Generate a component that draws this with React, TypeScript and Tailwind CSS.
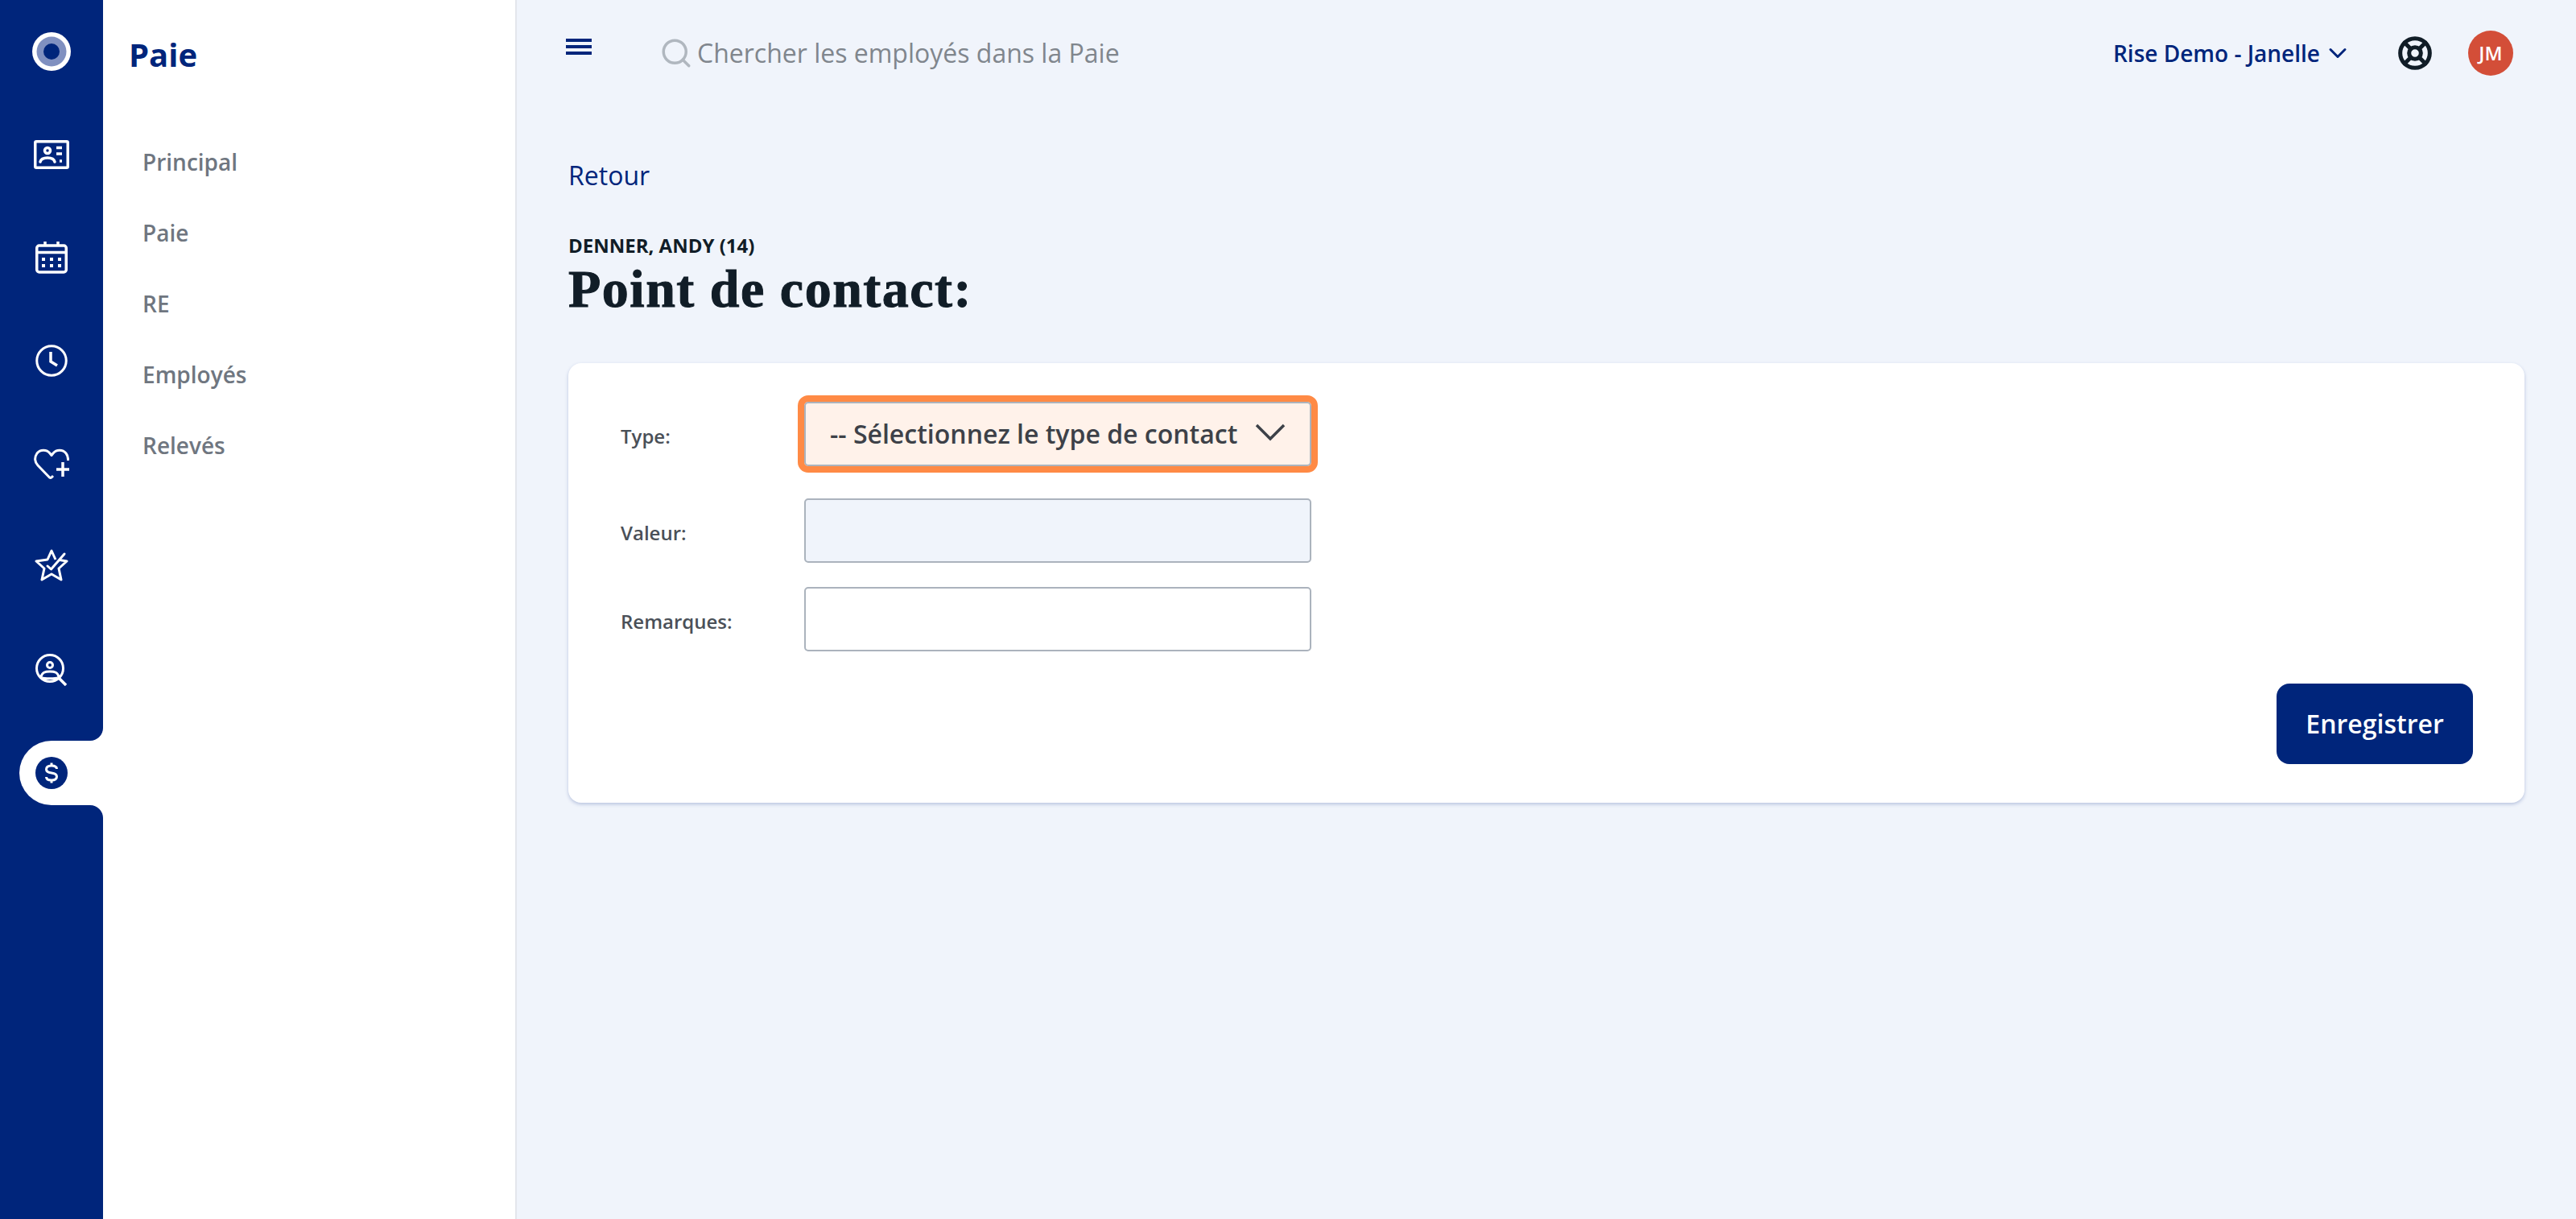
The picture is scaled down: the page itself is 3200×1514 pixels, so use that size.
import { ChevronDown, Search, LifeBuoy } from "lucide-react";

const IdCardIcon = () => (
	<svg width="44" height="36" viewBox="0 0 44 36" fill="none" stroke="white" strokeWidth="3.5">
		<rect x="1.75" y="1.75" width="40.5" height="32.5" rx="1.5" />
		<circle cx="17" cy="13" r="3.5" />
		<path d="M8 27c1-4 5-5 9-5s8 1 9 5" strokeLinecap="round" />
		<path d="M28 9.5h7M28 17h7M32 26h3" strokeWidth="3.5" />
	</svg>
);

const CalendarIcon = () => (
	<svg width="40" height="40" viewBox="0 0 40 40" fill="none" stroke="white" strokeWidth="3.5">
		<rect x="1.75" y="5" width="36.5" height="33" rx="3" />
		<path d="M1.75 13.5h36.5M12 0v6M28 0v6" />
		<path d="M8 22h4M18 22h4M28 22h4M8 30h4M18 30h4M28 30h4" strokeWidth="4" />
	</svg>
);

const ClockIcon = () => (
	<svg width="40" height="40" viewBox="0 0 40 40" fill="none" stroke="white" strokeWidth="3">
		<circle cx="20" cy="20" r="18.25" />
		<path d="M19 9v12l8 5" strokeWidth="3.5" />
	</svg>
);

const HeartPlusIcon = () => (
	<svg width="44" height="38" viewBox="0 0 44 38" fill="none" stroke="white" strokeWidth="3">
		<path d="M24 34l-2 2-1 .5-1.500-.5L5 21C1 17 .5 11 4 6c4-5 12-5 16 0l2 2.500 2-2.500c4-5 12-5 16 0 2 2.500 2.800 5 2.500 9" strokeLinejoin="round" />
		<path d="M36 17v18M28 26h16" strokeWidth="3.5" />
	</svg>
);

const StarCheckIcon = () => (
	<svg className="mb-1" width="42" height="40" viewBox="0 0 42 40" fill="none" stroke="white" strokeWidth="3" strokeLinejoin="round">
		<path d="M26 13L21 2l-5 11-14 2 10 9-3 14 12-7 12 7-3-14 10-9-9-1.500" />
		<path d="M16 21l4.500 4L37 6" strokeLinecap="round" />
	</svg>
);

const UserSearchIcon = () => (
	<svg width="40" height="40" viewBox="0 0 40 40" fill="none" stroke="white" strokeWidth="3">
		<circle cx="18" cy="18" r="16.500" />
		<circle cx="18" cy="14" r="3.500" />
		<path d="M7 29c1-6 5-7 11-7s10 1 11 7" />
		<path d="M8 30c3 1 17 1 20 0" />
		<path d="M29 30l9 9" strokeWidth="3.500" />
	</svg>
);

const DollarCircleIcon = () => (
	<svg width="40" height="40" viewBox="0 0 40 40">
		<circle cx="20" cy="20" r="20" fill="#00257b" />
		<path d="M26.500 15c0-2.500-2.500-4-6.500-4s-6.500 1.500-6.500 4.500 2.500 4 6.500 4.500 6.500 1.500 6.500 4.500-2.500 4.500-6.500 4.500-6.500-1.500-6.500-4" fill="none" stroke="white" strokeWidth="3" />
		<path d="M20 7.500v3M20 29v3.500" stroke="white" strokeWidth="3" />
	</svg>
);

const LogoIcon = () => (
	<svg width="48" height="48" viewBox="0 0 48 48">
		<circle cx="24" cy="24" r="24" fill="white" />
		<circle cx="24" cy="24" r="18.500" fill="#8090c0" />
		<circle cx="24" cy="24" r="10" fill="#00257b" />
	</svg>
);

const railIcons = [IdCardIcon, CalendarIcon, ClockIcon, HeartPlusIcon, StarCheckIcon, UserSearchIcon];
const navItems = ["Principal", "Paie", "RE", "Employés", "Relevés"];

const fieldClass = "w-[630px] h-20 rounded-[5px] border-2 border-[#abb3bd]";
const labelClass = "w-[228px] ml-px pt-[6px] text-[24px] font-semibold text-[#4a5058]";

const App = () => {
	return (
		<div className="flex h-[1514px] w-full overflow-hidden bg-[#f0f4fb] [font-family:'Open_Sans',sans-serif]">
			{/* Icon rail */}
			<div className="flex w-32 shrink-0 flex-col bg-[#00257b]">
				<div className="flex h-32 items-center justify-center">
					<LogoIcon />
				</div>
				{railIcons.map((Icon, index) => (
					<div key={index} className="flex h-32 items-center justify-center">
						<Icon />
					</div>
				))}
				<div className="relative my-6 ml-6 flex h-20 items-center rounded-l-[40px] bg-white pl-5">
					<DollarCircleIcon />
					<div className="absolute -top-4 right-0 h-4 w-4 bg-white">
						<div className="h-full w-full rounded-br-2xl bg-[#00257b]" />
					</div>
					<div className="absolute -bottom-4 right-0 h-4 w-4 bg-white">
						<div className="h-full w-full rounded-tr-2xl bg-[#00257b]" />
					</div>
				</div>
			</div>

			{/* Section nav */}
			<div className="w-[514px] shrink-0 border-r-2 border-r-[#e3e6ec] bg-white">
				<h2 className="pl-8 pt-[40px] text-[40px] leading-[56px] font-bold text-[#00257b]">Paie</h2>
				<div className="mt-[61px] flex flex-col">
					{navItems.map((item) => (
						<div key={item} className="flex h-[88px] items-center pl-[49px] text-[28px] font-semibold text-[#6f7680]">
							{item}
						</div>
					))}
				</div>
			</div>

			{/* Main */}
			<div className="flex min-w-0 flex-1 flex-col px-16">
				<div className="flex h-[132px] items-center">
					<svg className="mb-[16px] -ml-[3px]" width="32" height="20" viewBox="0 0 32 20" fill="#00257b">
						<rect width="32" height="4" />
						<rect y="8" width="32" height="4" />
						<rect y="16" width="32" height="4" />
					</svg>
					<Search className="ml-[84px] text-[#b0b7bf]" size={42} strokeWidth={2} />
					<span className="ml-[5px] text-[32px] text-[#80868d]">Chercher les employés dans la Paie</span>
					<div className="ml-auto flex items-center">
						<span className="text-[28px] font-semibold text-[#00257b]">Rise Demo - Janelle</span>
						<ChevronDown className="ml-1 text-[#00257b]" size={36} strokeWidth={2} />
						<LifeBuoy className="ml-[56px] text-[#111d27]" size={44} strokeWidth={2.75} />
						<div className="ml-[44px] mr-[14px] flex h-14 w-14 items-center justify-center rounded-full bg-[#d34e38] text-[24px] font-semibold text-white">
							JM
						</div>
					</div>
				</div>

				<a className="mt-[64px] text-[32px] leading-[44px] font-medium text-[#00257b]">Retour</a>
				<div className="mt-[49px] text-[24px] leading-[32px] font-bold text-[#111d27] uppercase">
					Denner, Andy (14)
				</div>
				<h1 className="mt-[3px] text-[66px] leading-[70px] font-bold tracking-[1.5px] text-[#111d27] [-webkit-text-stroke:1px_#111d27] [font-family:'Liberation_Serif',serif]">
					Point de contact:
				</h1>

				{/* Form card */}
				<div className="mt-[57px] flex flex-col rounded-2xl bg-white px-16 pt-12 pb-12 shadow-[0_2px_4px_rgba(60,85,160,0.3)]">
					<div className="flex items-center">
						<label className={labelClass}>Type:</label>
						<div className={`flex items-center justify-between bg-[#fff2ea] pr-[30px] pl-[30px] text-[32px] font-semibold text-[#3d4148] outline-8 outline-[#ff8a45] ${fieldClass}`}>
							<span>-- Sélectionnez le type de contact</span>
							<svg className="mb-[4px] shrink-0" width="38" height="22" viewBox="0 0 38 22" fill="none" stroke="#3d4148" strokeWidth="3.5">
								<path d="M2 2l17 17L36 2" />
							</svg>
						</div>
					</div>
					<div className="mt-10 flex items-center">
						<label className={labelClass}>Valeur:</label>
						<input className={`bg-[#f0f4fb] ${fieldClass}`} />
					</div>
					<div className="mt-[30px] flex items-center">
						<label className={labelClass}>Remarques:</label>
						<input className={`bg-white ${fieldClass}`} />
					</div>
					<div className="mt-10 flex justify-end">
						<button className="h-[100px] w-[244px] rounded-2xl bg-[#00257b] text-[32px] font-semibold text-white">
							Enregistrer
						</button>
					</div>
				</div>
			</div>
		</div>
	);
};

export default App;
